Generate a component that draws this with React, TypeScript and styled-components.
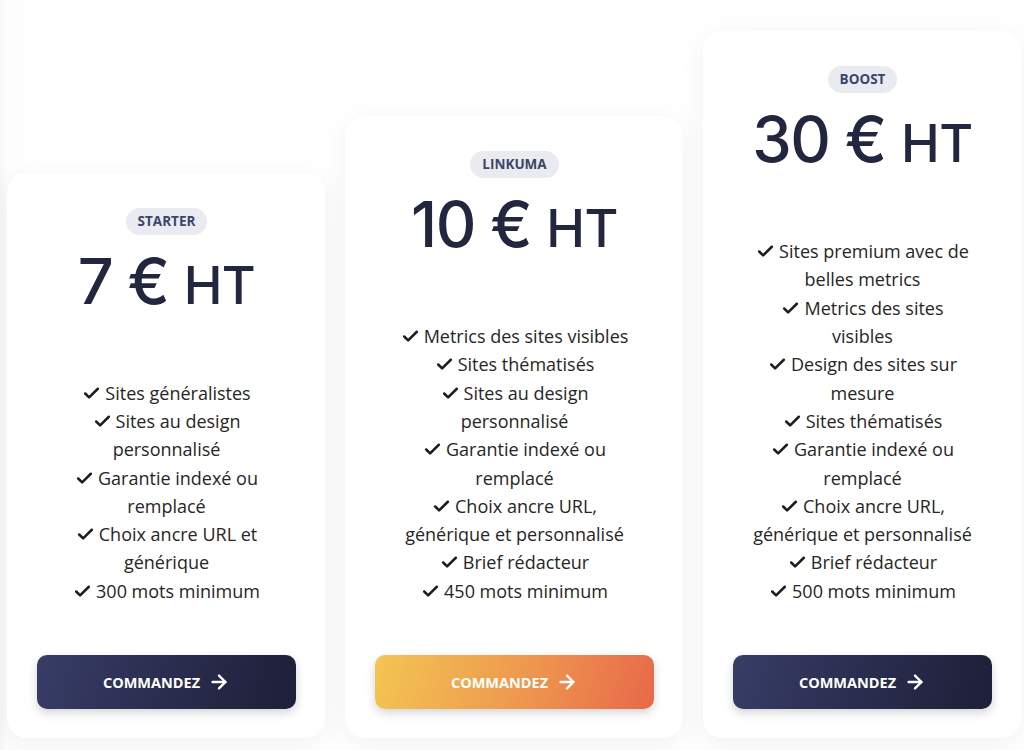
import React from "react";
import styled, { createGlobalStyle } from "styled-components";
import { Check, ArrowRight } from "lucide-react";

const GlobalStyle = createGlobalStyle`
  html, body { margin: 0; padding: 0; background: #ffffff; }
  * { box-sizing: border-box; }
`;

const Page = styled.div`
  height: 750px;
  width: 1024px;
  display: flex;
  align-items: flex-end;
  gap: 20px;
  padding: 0 0 12px 7px;
  overflow: hidden;
  background: linear-gradient(90deg, #f6f6f6 0px, #fdfdfd 7px, #ffffff 40px);
`;

const Card = styled.div<{ $w: number }>`
  width: ${(p) => p.$w}px;
  flex: 0 0 auto;
  background: #ffffff;
  border-radius: 20px;
  box-shadow: 0 6px 30px rgba(20, 20, 40, 0.06);
  display: flex;
  flex-direction: column;
  align-items: center;
  padding: 35px 29px 29px 30px;
`;

const Badge = styled.span`
  display: inline-block;
  background: #e9ebf0;
  color: #3b4668;
  font-family: "Open Sans", sans-serif;
  font-weight: 700;
  font-size: 13.5px;
  line-height: 27px;
  height: 27px;
  padding: 0 12px;
  border-radius: 14px;
`;

const Price = styled.div`
  margin-top: 6px;
  font-family: Inter, sans-serif;
  font-weight: 500;
  color: #23263f;
  font-size: 63px;
  line-height: 80px;
  height: 80px;
  white-space: nowrap;
  letter-spacing: -1.5px;
`;

const Unit = styled.span`
  font-size: 52px;
  font-weight: 500;
  letter-spacing: -0.5px;
`;

const Features = styled.ul<{ $max: number }>`
  list-style: none;
  margin: 58px 0 0;
  padding: 0;
  max-width: ${(p) => p.$max}px;
  text-align: center;
  font-family: "Open Sans", sans-serif;
  font-size: 18px;
  line-height: 28.3px;
  color: #262626;
`;

const Feature = styled.li`
  margin: 0;
`;

const Tick = styled(Check)`
  display: inline-block;
  vertical-align: -3px;
  margin-right: 4px;
`;

const Button = styled.button<{ $accent?: boolean }>`
  margin-top: 50px;
  width: 100%;
  height: 54px;
  border: none;
  border-radius: 10px;
  background: ${(p) =>
    p.$accent
      ? "linear-gradient(105deg, #f3c553 0%, #ee9b4e 50%, #e8684a 100%)"
      : "linear-gradient(105deg, #383d67 0%, #2a2d4e 50%, #1e1f38 100%)"};
  box-shadow: 0 4px 10px rgba(20, 20, 40, 0.18);
  color: #ffffff;
  font-family: "Open Sans", sans-serif;
  font-weight: 700;
  font-size: 14.5px;
  display: flex;
  align-items: center;
  justify-content: center;
  gap: 8px;
  cursor: pointer;
`;

type Plan = {
  name: string;
  price: string;
  width: number;
  max: number;
  accent?: boolean;
  features: string[];
};

const plans: Plan[] = [
  {
    name: "STARTER",
    price: "7",
    width: 318,
    max: 218,
    features: [
      "Sites généralistes",
      "Sites au design personnalisé",
      "Garantie indexé ou remplacé",
      "Choix ancre URL et générique",
      "300 mots minimum",
    ],
  },
  {
    name: "LINKUMA",
    price: "10",
    width: 338,
    max: 238,
    accent: true,
    features: [
      "Metrics des sites visibles",
      "Sites thématisés",
      "Sites au design personnalisé",
      "Garantie indexé ou remplacé",
      "Choix ancre URL, générique et personnalisé",
      "Brief rédacteur",
      "450 mots minimum",
    ],
  },
  {
    name: "BOOST",
    price: "30",
    width: 318,
    max: 222,
    features: [
      "Sites premium avec de belles metrics",
      "Metrics des sites visibles",
      "Design des sites sur mesure",
      "Sites thématisés",
      "Garantie indexé ou remplacé",
      "Choix ancre URL, générique et personnalisé",
      "Brief rédacteur",
      "500 mots minimum",
    ],
  },
];

export default function App() {
  return (
    <>
      <GlobalStyle />
      <Page>
        {plans.map((p) => (
          <Card key={p.name} $w={p.width}>
            <Badge>{p.name}</Badge>
            <Price>
              {p.price} € <Unit>HT</Unit>
            </Price>
            <Features $max={p.max}>
              {p.features.map((f) => (
                <Feature key={f}>
                  <Tick size={19} strokeWidth={3.2} color="#1d1d1d" />
                  {f}
                </Feature>
              ))}
            </Features>
            <Button $accent={p.accent}>
              COMMANDEZ <ArrowRight size={22} strokeWidth={2.6} />
            </Button>
          </Card>
        ))}
      </Page>
    </>
  );
}
